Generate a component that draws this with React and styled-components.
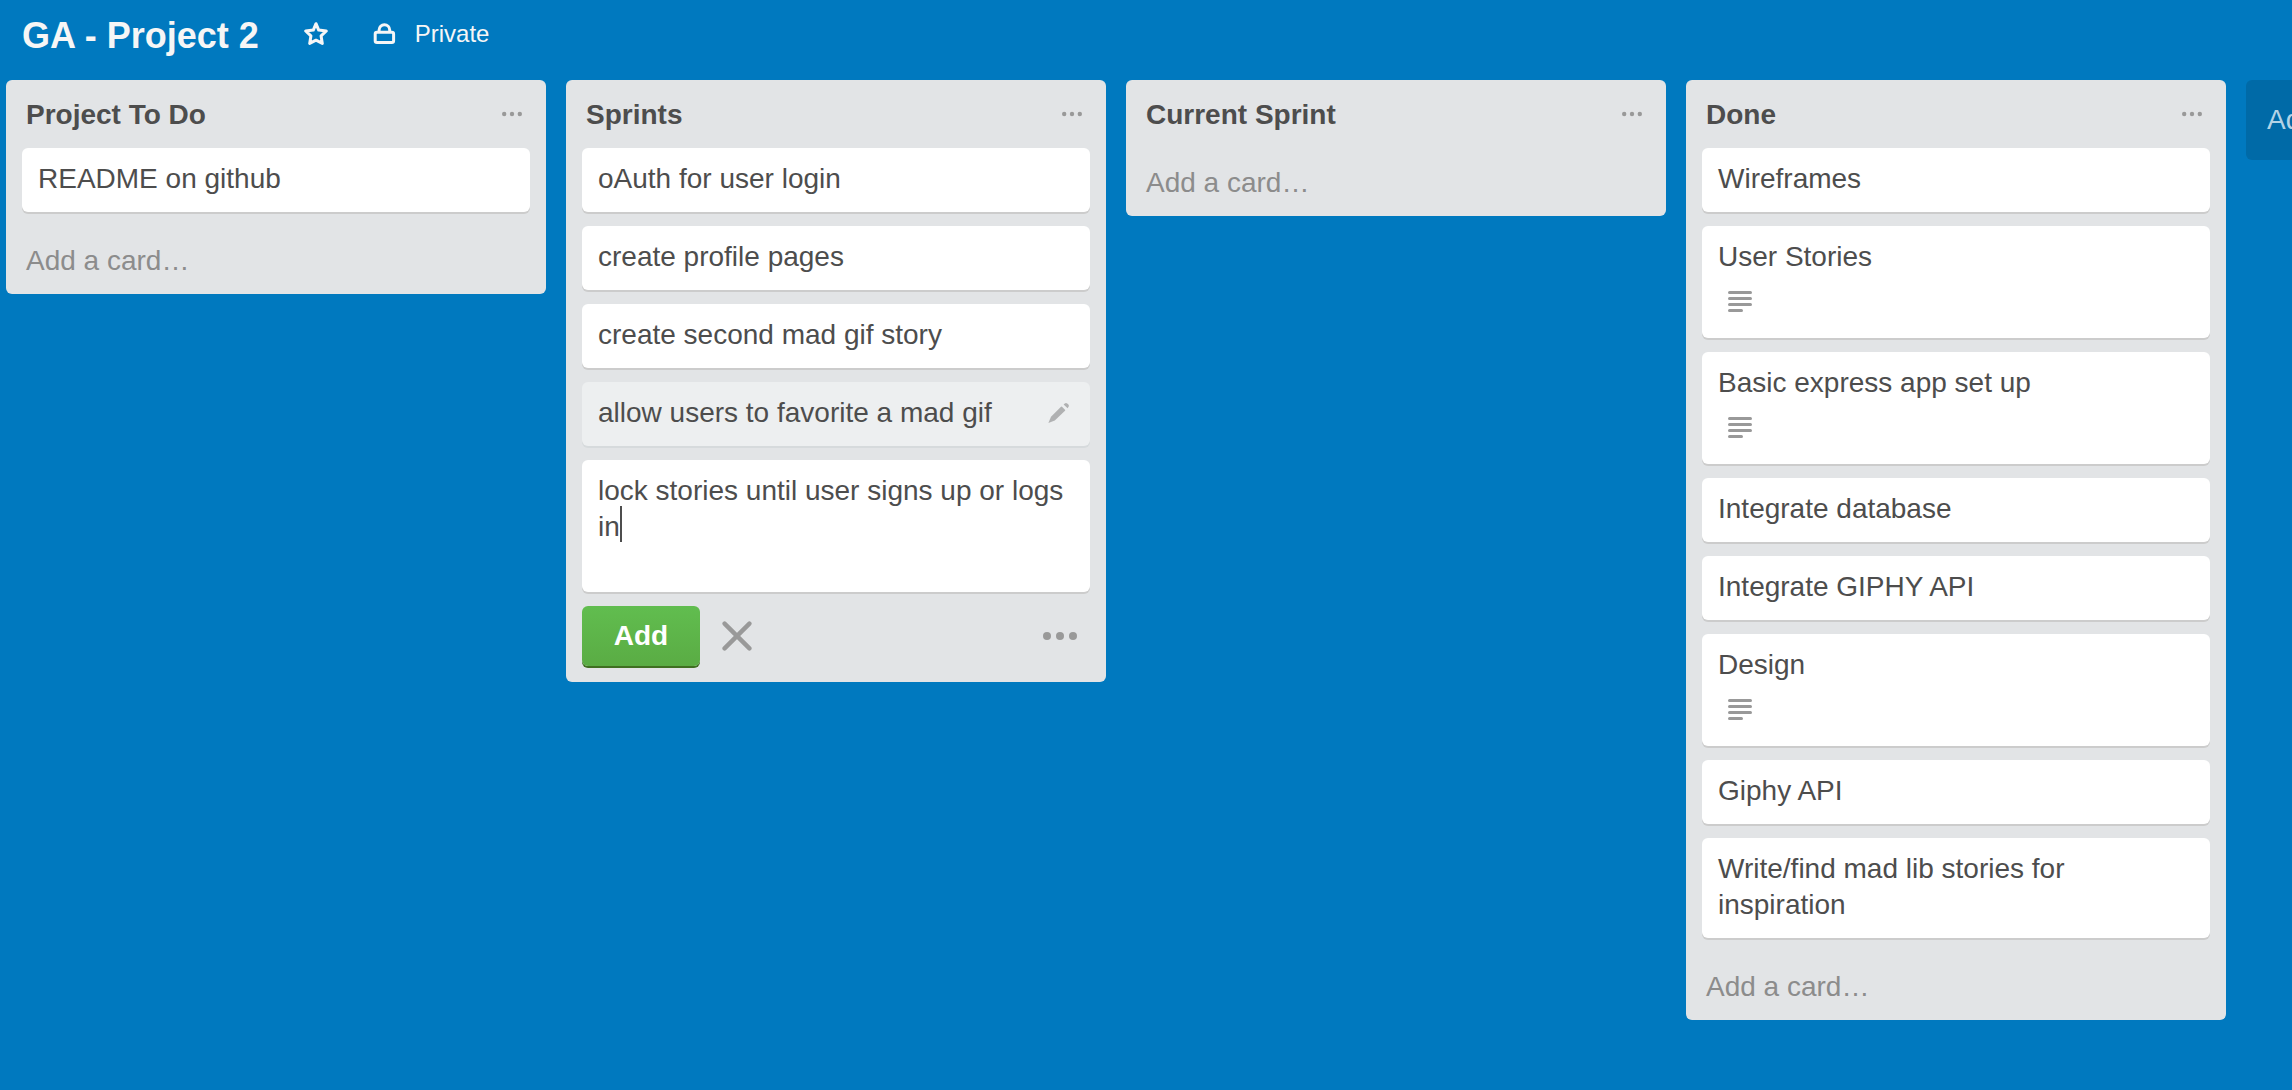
import React, { useState } from "react";
import styled, { createGlobalStyle, css } from "styled-components";

const GlobalStyle = createGlobalStyle`
  *, *::before, *::after { box-sizing: border-box; }
  body {
    margin: 0;
    overflow-x: hidden;
    background: #0079bf;
    color: #4d4d4d;
    font-family: "Liberation Sans", Arial, Helvetica, sans-serif;
    font-size: 28px;
    line-height: 36px;
  }
`;

const plainButton = css`
  display: flex;
  align-items: center;
  margin: 0;
  padding: 0;
  border: 0;
  background: none;
  color: inherit;
  font: inherit;
  cursor: pointer;
`;

const Page = styled.div`
  min-height: 100vh;
  overflow-x: hidden;
`;

const BoardHeader = styled.header`
  display: flex;
  align-items: center;
  gap: 45px;
  padding: 12px 22px 24px;
  color: #f6f6f6;
`;

const BoardTitle = styled.h1`
  margin: 0;
  padding-top: 4px;
  font-size: 36px;
  line-height: 40px;
`;

const HeaderButton = styled.button`
  ${plainButton}
  gap: 18px;
  font-size: 24px;
  line-height: 28px;
`;

const Lists = styled.main`
  display: flex;
  align-items: flex-start;
  gap: 20px;
  padding: 0 6px 20px;
`;

const List = styled.section`
  flex: 0 0 540px;
  padding: 0 16px;
  border-radius: 6px;
  background: #e2e4e6;
`;

const ListHeader = styled.header`
  display: flex;
  align-items: flex-start;
  justify-content: space-between;
  padding: 17px 4px 15px;
`;

const ListTitle = styled.h2`
  margin: 0;
  font-size: 28px;
  line-height: 36px;
`;

const IconButton = styled.button`
  ${plainButton}
  padding: ${(p) => p.$pad || "0"};
  color: #999;
`;

const Cards = styled.ul`
  margin: 0;
  padding: 0;
  list-style: none;
`;

const cardSurface = css`
  margin-bottom: 14px;
  border-radius: 6px;
  background: #fff;
  box-shadow: 0 2px 0 #ccc;
`;

const Card = styled.li`
  ${cardSurface}
  padding: 13px 16px 15px;
  ${(p) =>
    p.$active &&
    css`
      background: #edeff0;
      box-shadow: 0 2px 0 #d6dadc;
    `}
`;

const CardRow = styled.div`
  display: flex;
  align-items: center;
  justify-content: space-between;
`;

const CardLink = styled.a`
  color: inherit;
  text-decoration: none;
`;

const Badges = styled.div`
  display: flex;
  padding: 15px 10px 9px;
  color: #999;
`;

const AddCard = styled.button`
  ${plainButton}
  width: 100%;
  padding: 17px 4px 15px;
  color: #8c8c8c;
`;

const Composer = styled.form`
  margin: 0;
  padding-bottom: 16px;
`;

const ComposerCard = styled.div`
  ${cardSurface}
  position: relative;
`;

const ComposerText = styled.textarea`
  display: block;
  width: 100%;
  height: 132px;
  padding: 13px 16px;
  border: 0;
  outline: 0;
  resize: none;
  overflow: hidden;
  background: none;
  color: inherit;
  caret-color: transparent;
  font: inherit;
`;

const Caret = styled.span`
  position: absolute;
  top: 46px;
  left: 38px;
  width: 2px;
  height: 36px;
  background: #4d4d4d;
`;

const Controls = styled.div`
  display: flex;
  align-items: center;
`;

const SubmitButton = styled.button`
  ${plainButton}
  justify-content: center;
  width: 118px;
  height: 60px;
  margin-right: 22px;
  border-radius: 6px;
  background: linear-gradient(#61bd4f, #5aac44);
  box-shadow: 0 2px 0 #3f6f21;
  color: #fff;
  font-weight: bold;
`;

const Spacer = styled.span`
  flex: 1;
`;

const AddList = styled.button`
  ${plainButton}
  flex: 0 0 540px;
  height: 80px;
  padding: 0 21px;
  border-radius: 6px;
  background: #006aa7;
  color: #b3d3e6;
`;

const StarIcon = () => (
  <svg width="24" height="24" viewBox="0 0 24 24" fill="none" stroke="currentColor" strokeWidth="3" strokeLinejoin="round" aria-hidden="true">
    <path d="M12 1.7l2.7 6.4 7.6.9-5.2 4.9 1.2 7.5L12 18.2l-6.3 3.2 1.2-7.5L1.7 9l7.6-.9z" />
  </svg>
);

const LockIcon = () => (
  <svg width="24" height="24" viewBox="0 0 24 24" fill="none" stroke="currentColor" strokeWidth="3" aria-hidden="true">
    <rect x="2.2" y="10.2" width="18.4" height="10.4" rx="1.8" />
    <path d="M6.1 10.2V8a5.3 5.3 0 0 1 10.6 0v2.2" />
  </svg>
);

const DotsIcon = ({ width, radius }) => (
  <svg width={width} height="10" viewBox={`0 0 ${width} 10`} fill="currentColor" aria-hidden="true">
    <circle cx={radius} cy="5" r={radius} />
    <circle cx={width / 2} cy="5" r={radius} />
    <circle cx={width - radius} cy="5" r={radius} />
  </svg>
);

const DescriptionIcon = () => (
  <svg width="24" height="24" viewBox="0 0 24 24" fill="currentColor" role="img" aria-label="Has a description">
    <rect y="1" width="24" height="3" rx="1.5" />
    <rect y="7" width="24" height="3" rx="1.5" />
    <rect y="13" width="24" height="3" rx="1.5" />
    <rect y="19" width="15" height="3" rx="1.5" />
  </svg>
);

const PencilIcon = () => (
  <svg width="22" height="22" viewBox="0 0 22 22" fill="#b0b1b2" aria-hidden="true">
    <path d="M.4 21L3 14.8 13 4.7q.5-.5 1 0l3 3q.5.5 0 1L6.8 18.6z" />
    <path d="M15.6 2.6l1.2-1.2q1.2-1 2.4 0l1.2 1.2q1 1.2.2 2.2l-1 1.4z" />
  </svg>
);

const CloseIcon = () => (
  <svg width="30" height="30" viewBox="0 0 30 30" fill="none" stroke="currentColor" strokeWidth="4.4" strokeLinecap="round" aria-hidden="true">
    <path d="M2.6 2.6l24.8 24.8M27.4 2.6L2.6 27.4" />
  </svg>
);

const lists = [
  { title: "Project To Do", cards: [{ text: "README on github" }] },
  {
    title: "Sprints",
    composing: true,
    cards: [
      { text: "oAuth for user login" },
      { text: "create profile pages" },
      { text: "create second mad gif story" },
      { text: "allow users to favorite a mad gif", active: true },
    ],
  },
  { title: "Current Sprint", cards: [] },
  {
    title: "Done",
    cards: [
      { text: "Wireframes" },
      { text: "User Stories", description: true },
      { text: "Basic express app set up", description: true },
      { text: "Integrate database" },
      { text: "Integrate GIPHY API" },
      { text: "Design", description: true },
      { text: "Giphy API" },
      { text: "Write/find mad lib stories for inspiration" },
    ],
  },
];

function CardComposer() {
  const [text, setText] = useState("lock stories until user signs up or logs in");
  return (
    <Composer onSubmit={(e) => e.preventDefault()}>
      <ComposerCard>
        <ComposerText aria-label="Card title" spellCheck={false} value={text} onChange={(e) => setText(e.target.value)} />
        <Caret aria-hidden="true" />
      </ComposerCard>
      <Controls>
        <SubmitButton type="submit">Add</SubmitButton>
        <IconButton type="button" aria-label="Cancel">
          <CloseIcon />
        </IconButton>
        <Spacer />
        <IconButton type="button" aria-label="Card options" $pad="10px 13px">
          <DotsIcon width={34} radius={4} />
        </IconButton>
      </Controls>
    </Composer>
  );
}

function BoardCard({ text, description, active }) {
  return (
    <Card $active={active}>
      <CardRow>
        <CardLink href="#">{text}</CardLink>
        {active && (
          <IconButton type="button" aria-label="Edit card" $pad="0 4px">
            <PencilIcon />
          </IconButton>
        )}
      </CardRow>
      {description && (
        <Badges>
          <DescriptionIcon />
        </Badges>
      )}
    </Card>
  );
}

export default function App() {
  return (
    <Page>
      <GlobalStyle />
      <BoardHeader>
        <BoardTitle>GA - Project 2</BoardTitle>
        <HeaderButton type="button" aria-label="Star board">
          <StarIcon />
        </HeaderButton>
        <HeaderButton type="button">
          <LockIcon />
          Private
        </HeaderButton>
      </BoardHeader>
      <Lists>
        {lists.map((list) => (
          <List key={list.title}>
            <ListHeader>
              <ListTitle>{list.title}</ListTitle>
              <IconButton type="button" aria-label="List actions" $pad="12px 4px">
                <DotsIcon width={20} radius={2.2} />
              </IconButton>
            </ListHeader>
            {list.cards.length > 0 && (
              <Cards>
                {list.cards.map((card) => (
                  <BoardCard key={card.text} {...card} />
                ))}
              </Cards>
            )}
            {list.composing ? <CardComposer /> : <AddCard type="button">Add a card…</AddCard>}
          </List>
        ))}
        <AddList type="button">Add a list…</AddList>
      </Lists>
    </Page>
  );
}
